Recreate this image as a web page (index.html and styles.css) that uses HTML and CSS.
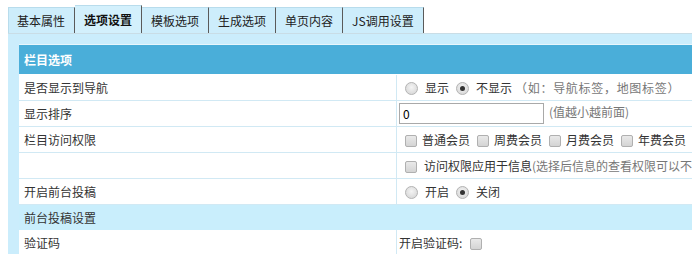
FILE: index.html
```html
<!DOCTYPE html>
<html>
<head>
<meta charset="utf-8">
<link rel="stylesheet" href="styles.css">
</head>
<body>
<div class="tabs">
  <div class="tab">基本属性</div>
  <div class="tab active">选项设置</div>
  <div class="tab">模板选项</div>
  <div class="tab">生成选项</div>
  <div class="tab">单页内容</div>
  <div class="tab">JS调用设置</div>
</div>
<div class="panel">
  <table class="form">
    <tr class="head"><td colspan="2">栏目选项</td></tr>
    <tr>
      <td class="lbl">是否显示到导航</td>
      <td class="val"><span class="radio"></span><span class="opt">显示</span><span class="radio on"></span><span class="opt">不显示</span><span class="hint paren">（如：导航标签，地图标签）</span></td>
    </tr>
    <tr>
      <td class="lbl">显示排序</td>
      <td class="val tight"><span class="input">0</span><span class="hint gap">(值越小越前面)</span></td>
    </tr>
    <tr>
      <td class="lbl">栏目访问权限</td>
      <td class="val"><span class="check"></span><span class="opt">普通会员</span><span class="check"></span><span class="opt">周费会员</span><span class="check"></span><span class="opt">月费会员</span><span class="check"></span><span class="opt">年费会员</span><span class="check"></span></td>
    </tr>
    <tr>
      <td class="lbl"></td>
      <td class="val"><span class="check"></span><span class="opt wide">访问权限应用于信息</span><span class="hint">(选择后信息的查看权限可以不</span></td>
    </tr>
    <tr>
      <td class="lbl">开启前台投稿</td>
      <td class="val"><span class="radio"></span><span class="opt">开启</span><span class="radio on"></span><span class="opt">关闭</span></td>
    </tr>
    <tr class="sub"><td colspan="2">前台投稿设置</td></tr>
    <tr>
      <td class="lbl">验证码</td>
      <td class="val tight">开启验证码:<span class="check cap"></span></td>
    </tr>
  </table>
</div>
</body>
</html>
```
FILE: styles.css
```css
html, body { margin: 0; padding: 0; background: #fff; overflow: hidden; }
body {
  width: 692px; height: 254px;
  font-family: "Noto Sans CJK SC", "Microsoft YaHei", sans-serif;
  font-size: 12px; color: #333;
  padding: 6px 0 0 8px; box-sizing: border-box;
}
.tabs { display: flex; align-items: flex-end; height: 27px; }
.tab {
  height: 25px; line-height: 25px; padding: 0 9px;
  background: #cdedfb; border-top: 1px solid #b8dcec; border-right: 1px solid #5a5a5a;
  color: #222; white-space: nowrap;
}
.tab:first-child { border-left: 1px solid #b8dcec; padding-left: 8px; }
.tab.active { height: 27px; line-height: 27px; background: #d3f0fc; font-weight: bold; color: #111; }
.panel {
  width: 800px; background: #cbedfc;
  border-top: 1px solid #c9dde6;
  padding: 10px 0 0 11px;
}
.form {
  width: 789px; border-collapse: collapse; background: #fff;
  border-top: 1px solid #7cc0e0;
}
.form td { padding: 0; height: 25px; border-bottom: 1px solid #d1e9f4; white-space: nowrap; }
.head td {
  height: 29px; background: #4aaed9; color: #fff; font-weight: bold;
  padding-left: 5px; border-top: 1px solid #e8f6fc; border-bottom: 1px solid #fff;
}
.lbl { width: 372px; padding-left: 5px !important; border-right: 1px solid #d1e9f4; }
.val { padding-left: 8px !important; color: #333; }
.val.tight { padding-left: 2px !important; }
.sub td { background: #c9eefc; padding-left: 5px; height: 24px; border-bottom: 1px solid #c9eefc; }
.radio, .check { display: inline-block; vertical-align: -2px; box-sizing: border-box; }
.radio {
  width: 13px; height: 13px; border-radius: 50%;
  background: radial-gradient(circle at 50% 40%, #f4f4f4 0, #dcdcdc 70%);
  border: 1px solid #b4b4b4; margin-right: 7px; position: relative;
}
.radio.on::after {
  content: ""; position: absolute; left: 3px; top: 3px; width: 5px; height: 5px;
  border-radius: 50%; background: #333;
}
.check {
  width: 12px; height: 12px; border: 1px solid #b0b0b0; border-radius: 2px;
  background: linear-gradient(#e9e9e9, #d4d4d4); margin-right: 5px;
}
.check.cap { margin-left: 8px; }
.opt { margin-right: 7px; color: #333; }
.opt.wide { margin-left: 2px; margin-right: 0; }
.hint { color: #777; }
.hint.paren { margin-left: -4px; letter-spacing: 0.7px; }
.hint.gap { margin-left: 5px; }
.input {
  display: inline-block; width: 145px; height: 21px; box-sizing: border-box;
  border: 1px solid #a9a9a9; padding-left: 3px; line-height: 19px;
  vertical-align: middle; color: #000;
}
```
